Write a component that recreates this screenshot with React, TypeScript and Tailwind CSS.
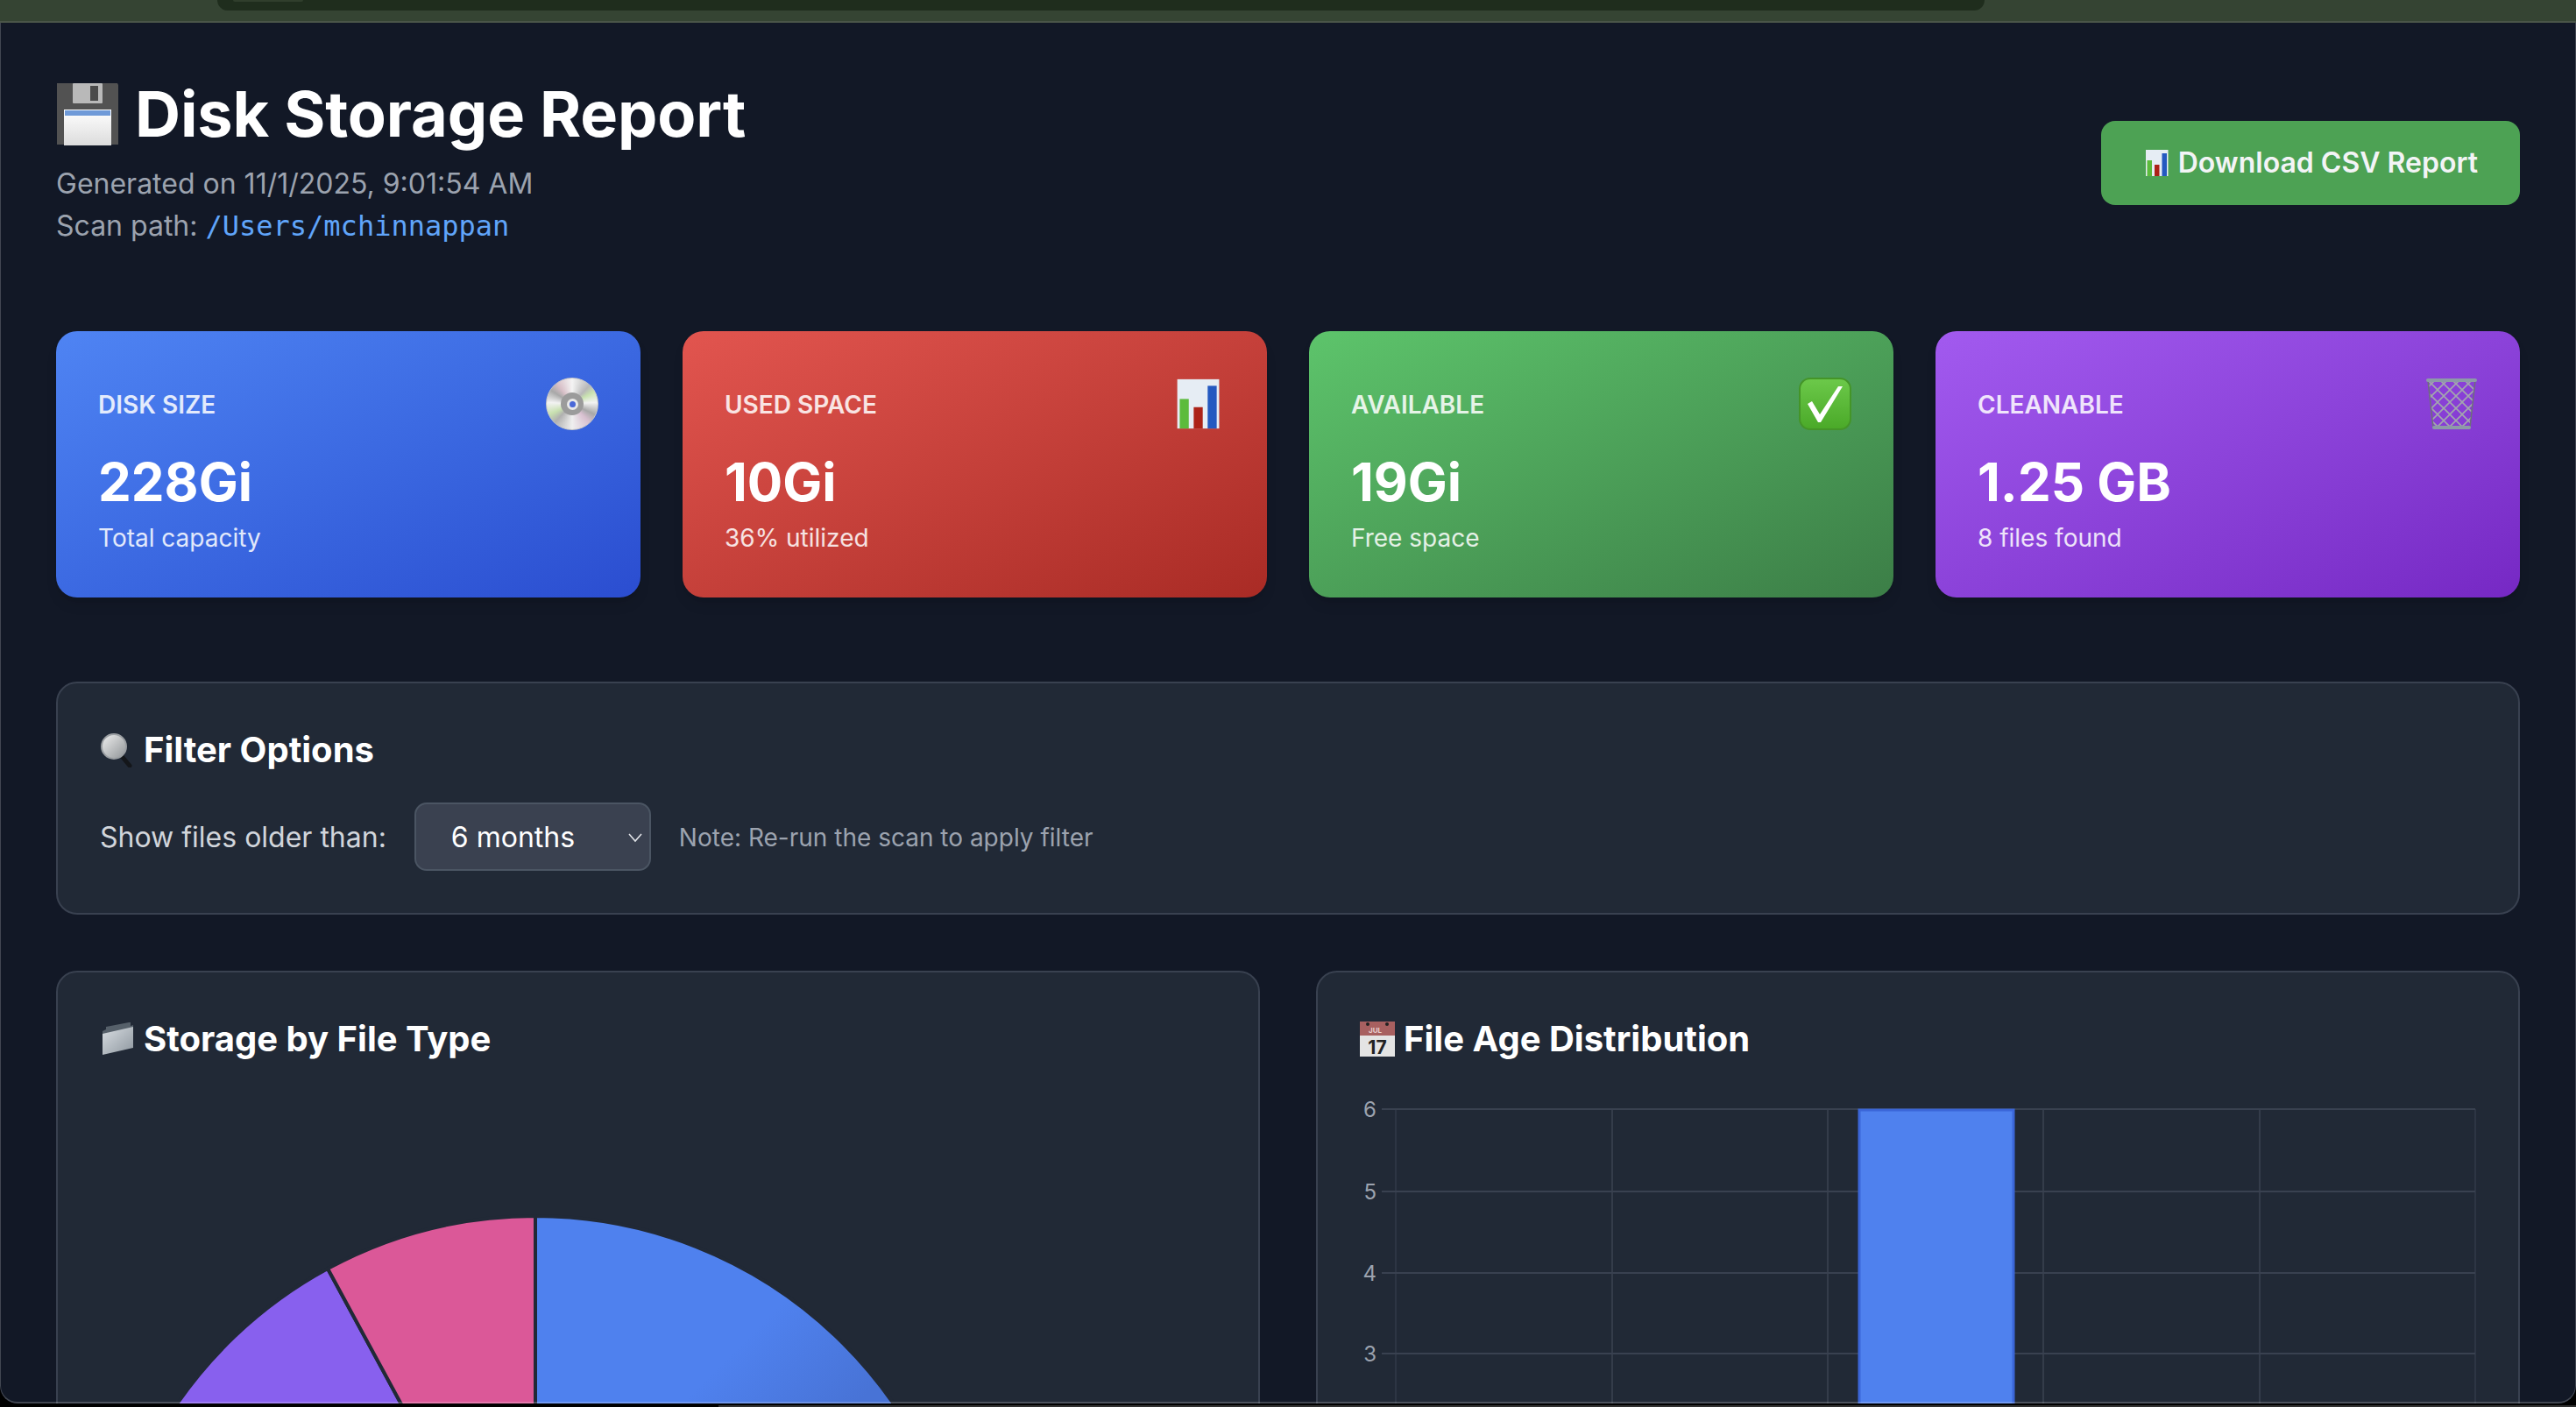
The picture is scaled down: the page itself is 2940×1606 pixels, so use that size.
const sans = { fontFamily: "Inter, 'Liberation Sans', sans-serif" };

const FloppyIcon = () => (
  <svg viewBox="0 0 72 72" className="h-[72px] w-[72px] shrink-0">
    <path d="M1 1h69l1 2v68H1z" fill="#525252" />
    <rect x="19" y="1" width="34" height="23" rx="1" fill="#b9b9b9" />
    <rect x="39" y="4" width="9" height="17" fill="#4a4a4a" />
    <rect x="9" y="31" width="54" height="41" fill="url(#floppyLabel)" />
    <rect x="10" y="32" width="52" height="6" fill="#6f9ad8" />
    <defs>
      <linearGradient id="floppyLabel" x1="0" y1="0" x2="0" y2="1">
        <stop offset="0" stopColor="#ffffff" />
        <stop offset="1" stopColor="#dcdcdc" />
      </linearGradient>
    </defs>
  </svg>
);

const BarsIcon = ({ size }: { size: number }) => (
  <svg viewBox="0 0 64 64" width={size} height={size} className="shrink-0">
    <rect x="6" y="2" width="51" height="60" fill="#e6edf4" />
    <rect x="9" y="26" width="11" height="36" fill="#5cbb3c" />
    <rect x="26" y="36" width="11" height="26" fill="#ac2318" />
    <rect x="43" y="10" width="11" height="52" fill="#2459c0" />
  </svg>
);

const DiscIcon = () => (
  <div className="flex h-[60px] w-[60px] shrink-0 items-center justify-center rounded-full border border-[#c8c8c8] bg-[conic-gradient(#f4f4f4,#b8b8b8_12%,#c9e2b0_17%,#f2f2f2_24%,#a8a8a8_32%,#d8c0d0_38%,#efefef_50%,#b0b0b0_62%,#c8e0b0_68%,#f2f2f2_76%,#a8a8a8_84%,#d8c0c8_90%,#f4f4f4)]">
    <div className="flex h-[26px] w-[26px] items-center justify-center rounded-full bg-[#9b9b9b]">
      <div className="h-[13px] w-[13px] rounded-full border-[3px] border-[#e8e8e8] bg-[#4a68d8]" />
    </div>
  </div>
);

const CheckIcon = () => (
  <svg viewBox="0 0 60 60" className="h-[60px] w-[60px] shrink-0">
    <defs>
      <linearGradient id="checkFill" x1="0" y1="0" x2="0" y2="1">
        <stop offset="0" stopColor="#6cc94a" />
        <stop offset="1" stopColor="#4aa928" />
      </linearGradient>
    </defs>
    <rect x="1" y="1" width="58" height="58" rx="12" fill="url(#checkFill)" stroke="#449528" strokeWidth="2" />
    <path d="M10 30l5-3 9 15L45 10h5L25 51h-3z" fill="#ffffff" />
  </svg>
);

const TrashIcon = () => (
  <svg viewBox="0 0 60 60" className="h-[60px] w-[60px] shrink-0">
    <defs>
      <pattern id="mesh" width="14" height="14" patternUnits="userSpaceOnUse">
        <path d="M0 0l14 14M14 0L0 14" stroke="#a3a7ad" strokeWidth="1.6" />
      </pattern>
    </defs>
    <path d="M3 3h54l-6 54H9z" fill="url(#mesh)" stroke="#6d6f78" strokeWidth="1.5" />
    <rect x="1" y="1" width="58" height="4" rx="2" fill="#8d9aa8" />
    <rect x="8" y="55" width="44" height="4" rx="2" fill="#8d9aa8" />
  </svg>
);

const MagnifierIcon = () => (
  <svg viewBox="0 0 40 40" className="h-[40px] w-[40px] shrink-0">
    <defs>
      <linearGradient id="lens" x1="0" y1="0" x2="1" y2="1">
        <stop offset="0" stopColor="#f0f0f0" />
        <stop offset="1" stopColor="#8f9396" />
      </linearGradient>
    </defs>
    <path d="M24 26l10 12" stroke="#14161a" strokeWidth="5" strokeLinecap="round" />
    <circle cx="16" cy="16" r="14" fill="url(#lens)" stroke="#9a9ea2" strokeWidth="2" />
  </svg>
);

const FolderIcon = () => (
  <svg viewBox="0 0 40 40" className="h-[40px] w-[40px] shrink-0">
    <defs>
      <linearGradient id="folderFill" x1="0" y1="0" x2="1" y2="1">
        <stop offset="0" stopColor="#d8dde2" />
        <stop offset="1" stopColor="#8e979f" />
      </linearGradient>
    </defs>
    <path d="M3 11l4-2V6l26-5h2v4l3-1v6L3 18z" fill="#56606a" />
    <path d="M3 14l35-8v24L3 38z" fill="url(#folderFill)" />
  </svg>
);

const CalendarIcon = () => (
  <svg viewBox="0 0 40 40" className="h-[40px] w-[40px] shrink-0">
    <rect x="0" y="0" width="40" height="16" fill="#a86060" />
    <rect x="0" y="16" width="40" height="24" fill="#e4e4e4" />
    <circle cx="9" cy="3" r="2" fill="#222" />
    <circle cx="31" cy="3" r="2" fill="#222" />
    <text x="10" y="13" fontSize="8" fill="#e8d0d0" style={sans}>JUL</text>
    <text x="20" y="37" fontSize="21" fill="#222" textAnchor="middle" style={sans}>17</text>
  </svg>
);

const StatCard = ({ label, value, sub, icon, bg }: { label: string; value: string; sub: string; icon: React.ReactNode; bg: string }) => (
  <div className={`rounded-[24px] p-[48px] shadow-lg ${bg}`}>
    <div className="mb-[18px] flex h-[70px] items-center justify-between">
      <span className="pt-[2px] text-[28px] font-semibold text-white/85 uppercase">{label}</span>
      {icon}
    </div>
    <div className="text-[60px] leading-[72px] font-bold text-white">{value}</div>
    <div className="mt-[8px] text-[28px] leading-[40px] text-white/85">{sub}</div>
  </div>
);

const SectionTitle = ({ icon, children }: { icon: React.ReactNode; children: React.ReactNode }) => (
  <h2 className="flex h-[56px] items-center gap-[10px] text-[40px] font-bold text-white">
    {icon}
    {children}
  </h2>
);

const PieChart = () => (
  <svg viewBox="0 0 1274 800" className="block h-[800px] w-full">
    <defs>
      <linearGradient id="pieBlue" gradientUnits="userSpaceOnUse" x1="700" y1="320" x2="800" y2="420">
        <stop offset="0" stopColor="#4f81ee" />
        <stop offset="1" stopColor="#4873d6" />
      </linearGradient>
    </defs>
    <path d="M497 639L0 639A497 497 0 0 1 260 202Z" fill="#8860ee" stroke="#212936" strokeWidth="4" />
    <path d="M497 639L260 202A497 497 0 0 1 497 142Z" fill="#db5898" stroke="#212936" strokeWidth="4" />
    <path d="M497 639L497 142A497 497 0 0 1 994 639Z" fill="url(#pieBlue)" stroke="#212936" strokeWidth="4" />
  </svg>
);

const gridRows = [
  { y: 20, label: "6" },
  { y: 114, label: "5" },
  { y: 207, label: "4" },
  { y: 299, label: "3" },
];
const gridCols = [41, 288, 534, 780, 1027, 1273];

const BarChart = () => (
  <svg viewBox="0 0 1274 800" className="block h-[800px] w-full">
    {gridCols.map((x) => (
      <line key={x} x1={x} y1={20} x2={x} y2={800} stroke="#3b4352" strokeWidth={x === 1273 || x === 41 ? 1 : 1.5} />
    ))}
    {gridRows.map((r) => (
      <g key={r.y}>
        <line x1={25} y1={r.y} x2={1273} y2={r.y} stroke="#394150" strokeWidth="2" />
        <text x={19} y={r.y + 9} textAnchor="end" fontSize="24" fill="#9ca3af" style={sans}>{r.label}</text>
      </g>
    ))}
    <rect x={570} y={21} width={176} height={779} fill="#4f81ee" stroke="#3b66d8" strokeWidth="3" />
  </svg>
);

export default function App() {
  return (
    <div className="flex h-[1606px] w-[2940px] flex-col overflow-hidden bg-black" style={sans}>
      {/* desktop strip above the browser window */}
      <div className="h-[24px] shrink-0 bg-[#354433]">
        <div className="ml-[248px] h-[12px] w-[2017px] rounded-b-[24px] bg-[#1f2d1d]">
          <div className="ml-[18px] h-[2px] w-[80px] rounded-b-[8px] bg-[#303e2c]" />
        </div>
      </div>
      <div className="h-[2px] shrink-0 bg-[#4a5548]" />

      <div className="relative h-[1576px] shrink-0 overflow-hidden rounded-b-[20px] bg-[#121826] px-[64px] pt-[64px]">
        <header className="mb-[96px] flex items-center justify-between">
          <div>
            <h1 className="flex h-[80px] items-center gap-[18px] text-[72px] font-bold tracking-[-0.1px] text-white">
              <FloppyIcon />
              Disk Storage Report
            </h1>
            <p className="mt-[16px] text-[32px] leading-[48px] text-[#9ca3af]">Generated on 11/1/2025, 9:01:54 AM</p>
            <p className="text-[32px] leading-[48px] text-[#9ca3af]">
              Scan path: <code className="text-[#60a5fa]" style={{ fontFamily: "'DejaVu Sans Mono', monospace" }}>/Users/mchinnappan</code>
            </p>
          </div>
          <button className="flex h-[96px] items-center gap-[8px] rounded-[16px] bg-[#4da254] px-[48px] text-[32px] font-semibold text-[#f3f4f6]">
            <BarsIcon size={32} />
            Download CSV Report
          </button>
        </header>

        <section className="mb-[96px] grid grid-cols-4 gap-[48px]">
          <StatCard label="Disk Size" value="228Gi" sub="Total capacity" icon={<DiscIcon />} bg="bg-linear-to-br from-[#4f84f3] to-[#2b4dd0]" />
          <StatCard label="Used Space" value="10Gi" sub="36% utilized" icon={<BarsIcon size={60} />} bg="bg-linear-to-br from-[#e2554f] to-[#a92b25]" />
          <StatCard label="Available" value="19Gi" sub="Free space" icon={<CheckIcon />} bg="bg-linear-to-br from-[#5dc46b] to-[#3c7e47]" />
          <StatCard label="Cleanable" value="1.25 GB" sub="8 files found" icon={<TrashIcon />} bg="bg-linear-to-br from-[#a25aef] to-[#7628c4]" />
        </section>

        <section className="mb-[64px] rounded-[24px] border-2 border-[#394150] bg-[#212936] p-[48px]">
          <SectionTitle icon={<MagnifierIcon />}>Filter Options</SectionTitle>
          <div className="mt-[32px] flex items-center">
            <label className="mr-[32px] pt-[2px] text-[32px] text-[#d1d5db]">Show files older than:</label>
            <div className="relative mr-[32px]">
              <select className="h-[78px] w-[270px] appearance-none rounded-[14px] border-2 border-[#4b5563] bg-[#3a4150] pt-[2px] pl-[40px] text-[32px] text-white">
                <option>6 months</option>
              </select>
              <svg viewBox="0 0 16 16" className="absolute top-[32px] right-[10px] h-[16px] w-[16px]" fill="none" stroke="#e5e7eb" strokeWidth="1.5">
                <path d="M1 4l7 8 7-8" />
              </svg>
            </div>
            <span className="pt-[2px] text-[28px] text-[#9ca3af]">Note: Re-run the scan to apply filter</span>
          </div>
        </section>

        <section className="grid grid-cols-2 gap-[64px]">
          <div className="rounded-[24px] border-2 border-[#394150] bg-[#212936] p-[48px]">
            <div className="mb-[32px]">
              <SectionTitle icon={<FolderIcon />}>Storage by File Type</SectionTitle>
            </div>
            <PieChart />
          </div>
          <div className="rounded-[24px] border-2 border-[#394150] bg-[#212936] p-[48px]">
            <div className="mb-[32px]">
              <SectionTitle icon={<CalendarIcon />}>File Age Distribution</SectionTitle>
            </div>
            <BarChart />
          </div>
        </section>

        {/* translucent window edge, lies over the page content */}
        <div className="pointer-events-none absolute inset-0 rounded-b-[20px] border-x border-b-2 border-white/20" />
      </div>

      <div className="h-[4px] shrink-0 bg-black">
        <div className="mt-[2px] ml-[820px] h-[2px] bg-[#333333]" />
      </div>
    </div>
  );
}
